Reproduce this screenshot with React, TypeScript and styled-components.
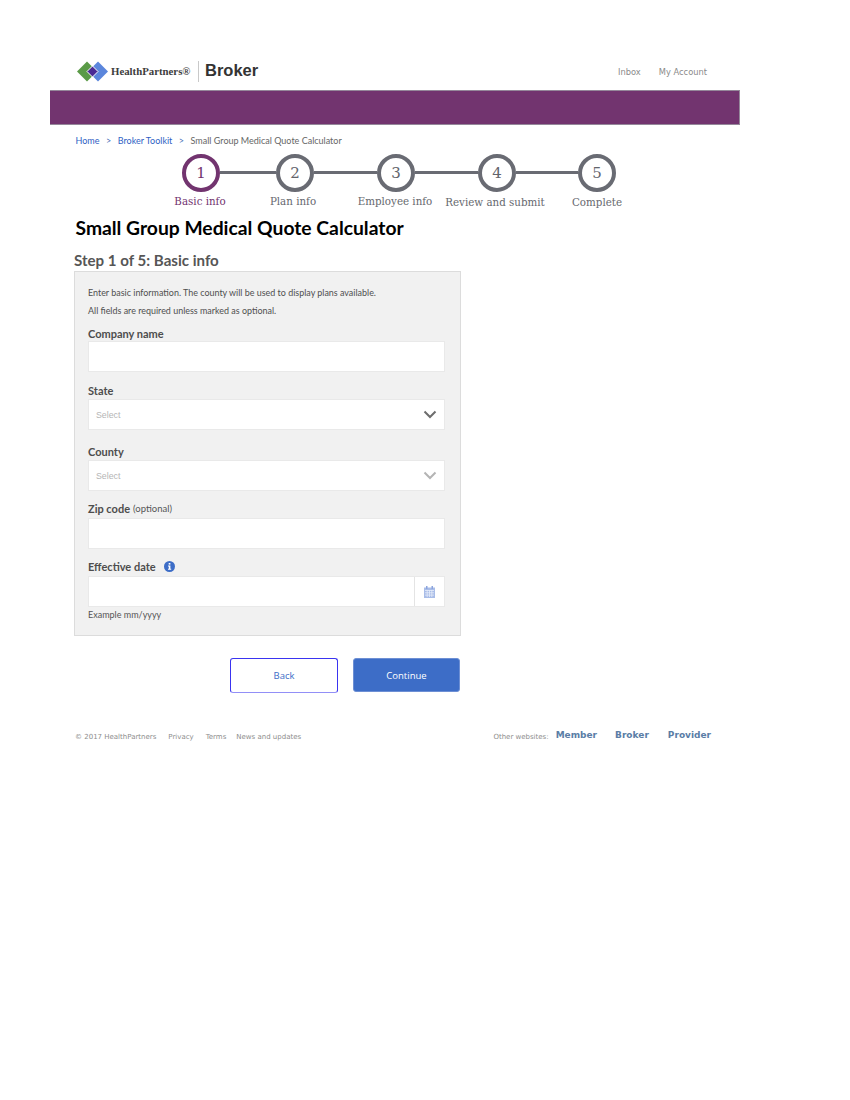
import styled, { createGlobalStyle } from 'styled-components'

const GlobalStyle = createGlobalStyle`
  html, body {
    margin: 0;
    padding: 0;
    background: #fff;
    font-family: Lato, "Liberation Sans", sans-serif;
  }
`

const Page = styled.div`
  width: 850px;
  height: 1100px;
  padding-top: 59px;
  box-sizing: border-box;
  overflow: hidden;
`

const Header = styled.header`
  display: flex;
  align-items: center;
  width: 707px;
  height: 24px;
  margin-left: 76px;
`

const Wordmark = styled.span`
  font-family: "Liberation Serif", serif;
  font-weight: 700;
  font-size: 10.8px;
  color: #3d3d3d;
  margin-left: 1px;
  width: 87px;
  white-space: nowrap;
`

const Divider = styled.span`
  width: 1px;
  height: 21px;
  background: #c9c9c9;
  margin-right: 6px;
`

const Product = styled.span`
  font-family: "Liberation Sans", sans-serif;
  font-weight: 700;
  font-size: 16.5px;
  color: #333;
  margin-bottom: 2px;
`

const AccountLinks = styled.nav`
  margin: 2px 76px 0 auto;
  display: flex;
  gap: 18px;
  font-family: "DejaVu Sans", sans-serif;
  font-size: 8.3px;
  color: #8a8a8a;
`

const Banner = styled.div`
  width: 690px;
  height: 35px;
  margin: 7px 0 0 50px;
  background: #72346f;
  border: 1px solid #95889a;
  border-left: 0;
  box-sizing: border-box;
`

const Breadcrumb = styled.nav`
  display: flex;
  align-items: center;
  height: 12px;
  margin: 9px 0 0 75.5px;
  font-size: 9px;
  color: #666;
`

const Crumb = styled.span`
  color: #2f5fc4;
`

const Sep = styled.span`
  margin: 0 6.5px;
  color: #4a6fb8;
`

const StepDots = styled.div`
  display: flex;
  align-items: center;
  margin: 7px 0 0 182px;
  height: 39px;
`

const Dot = styled.span<{ $active?: boolean }>`
  flex: none;
  width: 38px;
  height: 38px;
  box-sizing: border-box;
  border: 4px solid ${(p) => (p.$active ? '#72346f' : '#696b73')};
  border-radius: 50%;
  display: flex;
  align-items: center;
  justify-content: center;
  font-family: "DejaVu Serif", serif;
  font-size: 15px;
  color: ${(p) => (p.$active ? '#72346f' : '#62646b')};
`

const Connector = styled.span<{ $width: number }>`
  flex: none;
  width: ${(p) => p.$width}px;
  height: 3px;
  background: #696b73;
`

const StepLabels = styled.div`
  display: flex;
  height: 14px;
  margin-top: 3px;
  font-family: "DejaVu Serif", serif;
  font-size: 10.3px;
  white-space: nowrap;
`

const StepLabel = styled.span<{ $left: number; $width: number; $active?: boolean; $low?: boolean }>`
  margin-left: ${(p) => p.$left}px;
  margin-top: ${(p) => (p.$low ? '1px' : '0')};
  width: ${(p) => p.$width}px;
  text-align: center;
  color: ${(p) => (p.$active ? '#72346f' : '#66686e')};
`

const Title = styled.h1`
  margin: 7px 0 0 75.5px;
  font-size: 19.3px;
  line-height: 24px;
  font-weight: 700;
  color: #000;
`

const StepHeading = styled.h2`
  margin: 11px 0 0 74px;
  font-size: 15.1px;
  line-height: 18px;
  font-weight: 700;
  color: #565656;
`

const Panel = styled.section`
  width: 387px;
  height: 365px;
  margin: 2px 0 0 74px;
  padding: 15px 15px 0 13px;
  box-sizing: border-box;
  background: #f1f1f1;
  border: 1px solid #dcdcdc;
`

const Intro = styled.p`
  margin: 0 0 7px;
  font-size: 8.95px;
  line-height: 11px;
  color: #4f4f4f;
`

const Field = styled.div<{ $top: number }>`
  margin-top: ${(p) => p.$top}px;
`

const Label = styled.div<{ $gap: number }>`
  display: flex;
  align-items: center;
  height: 13px;
  margin-bottom: ${(p) => p.$gap}px;
  font-size: 11px;
  font-weight: 700;
  color: #4d4d4d;
`

const Optional = styled.span`
  margin-left: 3px;
  font-size: 9.5px;
  font-weight: 400;
  color: #555;
`

const Control = styled.div`
  display: flex;
  align-items: center;
  justify-content: space-between;
  width: 357px;
  height: 31px;
  box-sizing: border-box;
  background: #fff;
  border: 1px solid #e9e9e9;
  padding-left: 7px;
`

const Placeholder = styled.span`
  font-family: "Liberation Sans", sans-serif;
  font-size: 8.8px;
  color: #b5b5b5;
`

const Chevron = styled.svg`
  width: 14px;
  height: 9px;
  margin-right: 7px;
`

const CalendarCell = styled.span`
  align-self: stretch;
  width: 29px;
  border-left: 1px solid #e4e4e4;
  display: flex;
  align-items: center;
  justify-content: center;
`

const Hint = styled.div`
  margin-top: 2px;
  font-size: 9px;
  line-height: 11px;
  color: #555;
`

const Actions = styled.div`
  display: flex;
  gap: 15px;
  margin: 22px 0 0 230px;
`

const Button = styled.button<{ $primary?: boolean }>`
  width: ${(p) => (p.$primary ? '107px' : '108px')};
  height: ${(p) => (p.$primary ? '34px' : '35px')};
  padding: 0;
  box-sizing: border-box;
  border-radius: 3px;
  border: 1px solid ${(p) => (p.$primary ? '#6d8fd4' : '#3a34f0')};
  border-bottom-color: ${(p) => (p.$primary ? '#6d8fd4' : '#928ff7')};
  background: ${(p) => (p.$primary ? '#3d6dc7' : '#fff')};
  color: ${(p) => (p.$primary ? '#fff' : '#3d6dc7')};
  font-family: "Open Sans", sans-serif;
  font-size: 9.5px;
`

const Footer = styled.footer`
  display: flex;
  align-items: center;
  width: 636px;
  height: 14px;
  margin: 37px 0 0 75px;
  font-family: "DejaVu Sans", sans-serif;
  font-size: 7px;
  color: #8d8d8d;
`

const LegalLink = styled.span<{ $gap: number }>`
  margin-left: ${(p) => p.$gap}px;
`

const SiteLinks = styled.div`
  margin-left: auto;
  display: flex;
  align-items: center;
`

const SiteLink = styled.span<{ $gap: number }>`
  margin: 0 0 4px ${(p) => p.$gap}px;
  font-weight: 700;
  font-size: 9px;
  color: #5a7da6;
`

const Logo = () => (
  <svg width="34" height="22" viewBox="0 0 34 22" style={{ flex: 'none' }}>
    <polygon points="1,11.500 11,1.500 21,11.500 11,21.500" fill="#5a9a47" />
    <polygon points="12,11.500 22,1.500 32,11.500 22,21.500" fill="#5b86dc" />
    <polygon points="11,11.500 16.500,6 22,11.500 16.500,17" fill="#4a2a94" stroke="#fff" strokeWidth="1" />
  </svg>
)

const InfoIcon = () => (
  <svg width="11" height="11" viewBox="0 0 11 11" style={{ marginLeft: 8 }}>
    <circle cx="5.500" cy="5.500" r="5.500" fill="#3d6dc7" />
    <rect x="4.700" y="2" width="1.700" height="1.600" fill="#fff" />
    <path d="M4 4.600h2.400v3.200h.8v1H4v-1h.8V5.600H4z" fill="#fff" />
  </svg>
)

const CalendarIcon = () => (
  <svg width="11" height="12" viewBox="0 0 11 12">
    <rect x="0" y="1.500" width="11" height="10.500" fill="#a9bde8" />
    <rect x="2" y="0" width="1.500" height="3" fill="#8ba4de" />
    <rect x="7.500" y="0" width="1.500" height="3" fill="#8ba4de" />
    <path d="M1 4.500h9M1 6.800h9M1 9.100h9M3.200 4v7M5.500 4v7M7.800 4v7" stroke="#e6ecfa" strokeWidth="0.8" />
  </svg>
)

const SelectChevron = ({ muted }: { muted?: boolean }) => (
  <Chevron viewBox="0 0 14 9">
    <path d="M1.500 1.500 7 7l5.500-5.500" fill="none" stroke={muted ? '#b4b4b4' : '#6d6d6d'} strokeWidth="2" />
  </Chevron>
)

const App = () => (
  <Page>
    <GlobalStyle />
    <Header>
      <Logo />
      <Wordmark>HealthPartners®</Wordmark>
      <Divider />
      <Product>Broker</Product>
      <AccountLinks>
        <span>Inbox</span>
        <span>My Account</span>
      </AccountLinks>
    </Header>
    <Banner />
    <Breadcrumb>
      <Crumb>Home</Crumb>
      <Sep>&gt;</Sep>
      <Crumb>Broker Toolkit</Crumb>
      <Sep>&gt;</Sep>
      Small Group Medical Quote Calculator
    </Breadcrumb>

    <StepDots>
      <Dot $active>1</Dot>
      <Connector $width={56} />
      <Dot>2</Dot>
      <Connector $width={63} />
      <Dot>3</Dot>
      <Connector $width={63} />
      <Dot>4</Dot>
      <Connector $width={62} />
      <Dot>5</Dot>
    </StepDots>
    <StepLabels>
      <StepLabel $active $left={170} $width={60}>Basic info</StepLabel>
      <StepLabel $left={33} $width={60}>Plan info</StepLabel>
      <StepLabel $left={30} $width={84}>Employee info</StepLabel>
      <StepLabel $low $left={4} $width={108}>Review and submit</StepLabel>
      <StepLabel $low $left={18} $width={60}>Complete</StepLabel>
    </StepLabels>

    <Title>Small Group Medical Quote Calculator</Title>
    <StepHeading>Step 1 of 5: Basic info</StepHeading>

    <Panel>
      <Intro>Enter basic information. The county will be used to display plans available.</Intro>
      <Intro>All fields are required unless marked as optional.</Intro>
      <Field $top={11}>
        <Label $gap={1}>Company name</Label>
        <Control />
      </Field>
      <Field $top={12}>
        <Label $gap={2}>State</Label>
        <Control>
          <Placeholder>Select</Placeholder>
          <SelectChevron />
        </Control>
      </Field>
      <Field $top={15}>
        <Label $gap={2}>County</Label>
        <Control>
          <Placeholder>Select</Placeholder>
          <SelectChevron muted />
        </Control>
      </Field>
      <Field $top={11}>
        <Label $gap={3}>
          Zip code <Optional>(optional)</Optional>
        </Label>
        <Control />
      </Field>
      <Field $top={11}>
        <Label $gap={3}>
          Effective date
          <InfoIcon />
        </Label>
        <Control>
          <span />
          <CalendarCell>
            <CalendarIcon />
          </CalendarCell>
        </Control>
        <Hint>Example mm/yyyy</Hint>
      </Field>
    </Panel>

    <Actions>
      <Button>Back</Button>
      <Button $primary>Continue</Button>
    </Actions>

    <Footer>
      <span>© 2017 HealthPartners</span>
      <LegalLink $gap={12}>Privacy</LegalLink>
      <LegalLink $gap={12}>Terms</LegalLink>
      <LegalLink $gap={10}>News and updates</LegalLink>
      <SiteLinks>
        <span>Other websites:</span>
        <SiteLink $gap={7}>Member</SiteLink>
        <SiteLink $gap={18}>Broker</SiteLink>
        <SiteLink $gap={19}>Provider</SiteLink>
      </SiteLinks>
    </Footer>
  </Page>
)

export default App
